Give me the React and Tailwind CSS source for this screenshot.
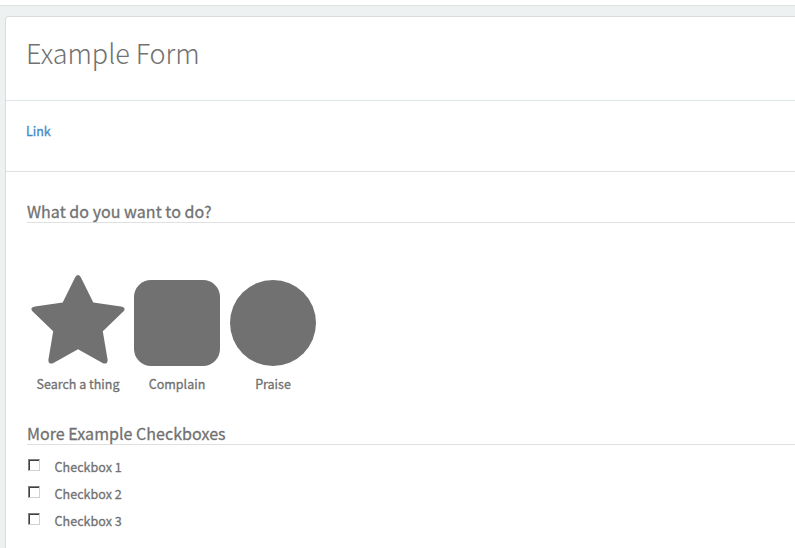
const choices = [
  {
    label: 'Search a thing',
    cell: 'w-[102px]',
    icon: (
      <svg className="block h-[92px] w-[96px]" viewBox="0 0 96 92" fill="#717171">
        <path d="M45.2 3.2 Q48 -1.2 50.8 3.2 L63.3 28.6 L91 32.4 Q96.8 33.5 93.3 37.6 L72.8 57.3 L77.6 85.8 Q77.8 90.5 73 89.3 L48 75.3 L23 89.3 Q18.2 90.5 18.4 85.8 L23.2 57.3 L2.7 37.6 Q-.8 33.5 5 32.4 L32.7 28.6Z" />
      </svg>
    ),
  },
  {
    label: 'Complain',
    cell: 'w-[96px]',
    icon: <div className="size-[86px] rounded-[17px] bg-[#717171]" />,
  },
  {
    label: 'Praise',
    cell: 'w-[96px]',
    icon: <div className="size-[86px] rounded-full bg-[#717171]" />,
  },
];

function SectionTitle({ children, className }) {
  return (
    <h2 className={'h-[22px] border-b border-[#e0e0e0] text-[16px] leading-[21px] font-normal tracking-[0.04px] whitespace-nowrap [-webkit-text-stroke:0.3px_#717171] ' + className}>
      {children}
    </h2>
  );
}

function Checkbox({ label }) {
  return (
    <label className="flex h-[27px] items-center">
      <input
        type="checkbox"
        className="mr-[14.5px] mb-[4px] ml-px size-[12px] appearance-none border border-t-[#808080] border-r-[#d4d0c8] border-b-[#d4d0c8] border-l-[#808080] bg-white shadow-[inset_1px_1px_0_#404040]"
      />
      <span className="text-[12.5px] leading-[20px] font-normal tracking-[0.05px] [-webkit-text-stroke:0.3px_#717171]">{label}</span>
    </label>
  );
}

export default function App() {
  return (
    <div className="flex h-[548px] w-[795px] flex-col overflow-hidden bg-[#edf1f2] font-['Noto_Sans_CJK_SC','Noto_Sans',sans-serif] text-[#717171]">
      <div className="h-[6px] shrink-0 border-b border-[#dee2e3] bg-white" />
      <main className="mt-[10px] ml-[5px] h-[540px] shrink-0 rounded-tl-[4px] border-t border-l border-[#dbdbdb] bg-white">
        <header className="h-[84px] border-b border-[#dee5e7] pt-[16px] pl-[20px]">
          <h1 className="text-[27px] leading-[40px] font-light tracking-[-0.05px]">Example Form</h1>
        </header>
        <div className="h-[71px] border-b border-[#e0e0e0] pt-[20px] pl-[20px]">
          <a className="block text-[12.5px] leading-[20px] font-normal text-[#428bca] [-webkit-text-stroke:0.3px_#428bca]" href="#">Link</a>
        </div>
        <section className="pt-[29px] pl-[21px]">
          <SectionTitle className="">What do you want to do?</SectionTitle>
          <div className="mt-[50px] flex">
            {choices.map((choice) => (
              <div key={choice.label} className={'flex flex-col items-center ' + choice.cell}>
                <div className="flex h-[101px] items-end pb-[8px]">{choice.icon}</div>
                <span className="text-[12.5px] leading-[20px] font-normal whitespace-nowrap [-webkit-text-stroke:0.3px_#717171]">{choice.label}</span>
              </div>
            ))}
          </div>
          <SectionTitle className="mt-[29px]">More Example Checkboxes</SectionTitle>
          <div className="pt-[8px]">
            <Checkbox label="Checkbox 1" />
            <Checkbox label="Checkbox 2" />
            <Checkbox label="Checkbox 3" />
          </div>
        </section>
      </main>
    </div>
  );
}
